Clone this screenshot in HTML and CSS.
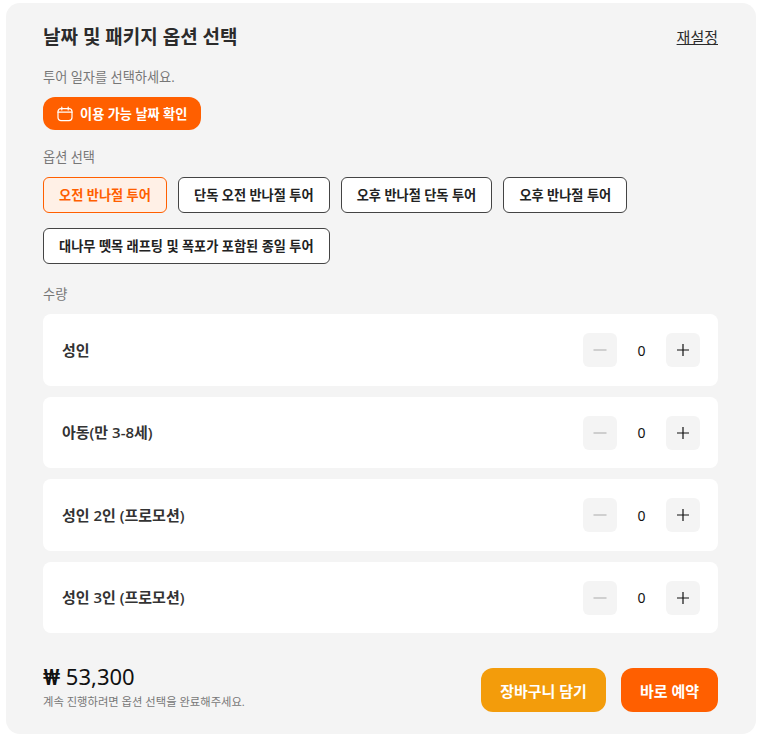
FILE: index.html
```html
<!DOCTYPE html>
<html lang="ko">
<head>
<meta charset="utf-8">
<title>날짜 및 패키지 옵션 선택</title>
<link rel="stylesheet" href="styles.css">
</head>
<body>
<section class="panel">
  <header class="head">
    <h2 class="title">날짜 및 패키지 옵션 선택</h2>
    <a class="reset" href="#">재설정</a>
  </header>
  <p class="label label-date">투어 일자를 선택하세요.</p>
  <button class="date-btn">
    <svg class="cal" width="16" height="16" viewBox="0 0 16 16" fill="none" stroke="currentColor" stroke-width="1.2" stroke-linecap="round"><rect x="1" y="2.6" width="14" height="12" rx="3"/><path d="M1 6.2h14M4.8 1v3M11.2 1v3"/></svg>
    이용 가능 날짜 확인
  </button>
  <p class="label label-opt">옵션 선택</p>
  <div class="chips">
    <button class="chip chip-on">오전 반나절 투어</button>
    <button class="chip">단독 오전 반나절 투어</button>
    <button class="chip">오후 반나절 단독 투어</button>
    <button class="chip">오후 반나절 투어</button>
    <button class="chip">대나무 뗏목 래프팅 및 폭포가 포함된 종일 투어</button>
  </div>
  <p class="label label-qty">수량</p>
  <div class="rows">
    <div class="row"><span class="row-name">성인</span><div class="stepper"><button class="step step-off"><svg width="14" height="14" viewBox="0 0 14 14" stroke="currentColor" stroke-width="1.2"><path d="M0.5 7h13"/></svg></button><span class="count">0</span><button class="step"><svg width="14" height="14" viewBox="0 0 14 14" stroke="currentColor" stroke-width="1.2"><path d="M1 7h12M7 1v12"/></svg></button></div></div>
    <div class="row"><span class="row-name">아동(만 3-8세)</span><div class="stepper"><button class="step step-off"><svg width="14" height="14" viewBox="0 0 14 14" stroke="currentColor" stroke-width="1.2"><path d="M0.5 7h13"/></svg></button><span class="count">0</span><button class="step"><svg width="14" height="14" viewBox="0 0 14 14" stroke="currentColor" stroke-width="1.2"><path d="M1 7h12M7 1v12"/></svg></button></div></div>
    <div class="row"><span class="row-name">성인 2인 (프로모션)</span><div class="stepper"><button class="step step-off"><svg width="14" height="14" viewBox="0 0 14 14" stroke="currentColor" stroke-width="1.2"><path d="M0.5 7h13"/></svg></button><span class="count">0</span><button class="step"><svg width="14" height="14" viewBox="0 0 14 14" stroke="currentColor" stroke-width="1.2"><path d="M1 7h12M7 1v12"/></svg></button></div></div>
    <div class="row"><span class="row-name">성인 3인 (프로모션)</span><div class="stepper"><button class="step step-off"><svg width="14" height="14" viewBox="0 0 14 14" stroke="currentColor" stroke-width="1.2"><path d="M0.5 7h13"/></svg></button><span class="count">0</span><button class="step"><svg width="14" height="14" viewBox="0 0 14 14" stroke="currentColor" stroke-width="1.2"><path d="M1 7h12M7 1v12"/></svg></button></div></div>
  </div>
  <footer class="foot">
    <div class="price-box">
      <div class="price"><span class="won">₩</span> 53,300</div>
      <div class="note">계속 진행하려면 옵션 선택을 완료해주세요.</div>
    </div>
    <div class="actions">
      <button class="cta cta-cart">장바구니 담기</button>
      <button class="cta cta-book">바로 예약</button>
    </div>
  </footer>
</section>
</body>
</html>
```
FILE: styles.css
```css
* { box-sizing: border-box; }
html, body { margin: 0; background: #fff; }
body {
  padding: 3px 6px 4px;
  font-family: "Open Sans", "Roboto", "Noto Sans CJK KR", sans-serif;
  color: #222;
}
button { font-family: inherit; cursor: pointer; }
p { margin: 0; }
.panel {
  height: 731px;
  background: #f4f4f4;
  border-radius: 14px;
  padding: 20px 38px 22px 37px;
  display: flex;
  flex-direction: column;
}
.head { display: flex; justify-content: space-between; align-items: center; height: 28px; }
.title { margin: 0; font-size: 19px; line-height: 28px; font-weight: 600; color: #2b2b2b; }
.reset { font-size: 15px; line-height: 20px; color: #2b2b2b; text-decoration: underline; }
.label { font-size: 13.2px; line-height: 18px; color: #777; }
.label-date { margin-top: 17px; }
.date-btn {
  margin-top: 11px;
  align-self: flex-start;
  height: 33px;
  width: 158px;
  padding: 0 14px;
  border: 0;
  border-radius: 12px;
  background: #ff5f00;
  color: #fff;
  font-size: 13.2px;
  font-weight: 600;
  display: flex;
  align-items: center;
  gap: 7px;
  white-space: nowrap;
}
.cal { flex: none; }
.label-opt { margin-top: 18px; }
.chips { margin-top: 11px; display: flex; flex-wrap: wrap; gap: 15px 11px; }
.chip {
  height: 36px;
  padding: 0 15.1px;
  background: #fff;
  border: 1px solid #444;
  border-radius: 6px;
  color: #222;
  font-size: 13.2px;
  line-height: 18px;
  font-weight: 600;
  white-space: nowrap;
}
.chip-on { background: #fff0e6; border-color: #ff5f00; color: #ff5f00; }
.label-qty { margin-top: 21px; }
.rows { margin-top: 11.3px; display: flex; flex-direction: column; gap: 11px; }
.row {
  height: 71.5px;
  background: #fff;
  border-radius: 8px;
  padding: 0 18px 0 19px;
  display: flex;
  justify-content: space-between;
  align-items: center;
}
.row-name { font-size: 15px; line-height: 21px; font-weight: 600; color: #333; }
.stepper { display: flex; align-items: center; }
.step {
  width: 34px;
  height: 34px;
  padding: 0;
  border: 0;
  border-radius: 6px;
  background: #f4f4f4;
  color: #111;
  display: flex;
  align-items: center;
  justify-content: center;
}
.step-off { color: #b5b5b5; }
.count { width: 49px; text-align: center; font-family: "Noto Sans", sans-serif; font-size: 14px; line-height: 21px; font-weight: 400; color: #111; }
.foot { margin-top: auto; display: flex; justify-content: space-between; align-items: flex-end; }
.price-box { padding-bottom: 2px; }
.price { font-family: "Noto Sans", sans-serif; font-size: 22px; line-height: 28px; font-weight: 400; color: #111; }
.won { font-family: "Roboto", sans-serif; font-weight: 500; }
.note { margin-top: 2px; font-size: 11.3px; line-height: 16px; color: #777; }
.actions { display: flex; gap: 15px; }
.cta {
  height: 44px;
  border: 0;
  border-radius: 12px;
  color: #fff;
  font-size: 15px;
  font-weight: 600;
  padding: 0 19px;
  white-space: nowrap;
}
.cta-cart { background: #f39c0b; }
.cta-book { background: #ff5f00; }
```
